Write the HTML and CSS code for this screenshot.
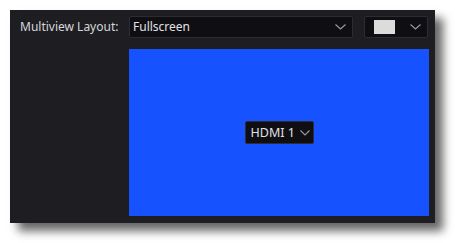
FILE: index.html
```html
<!DOCTYPE html>
<html>
<head>
<meta charset="utf-8">
<link rel="stylesheet" href="styles.css">
</head>
<body>
<div class="panel">
  <div class="label">Multiview Layout:</div>
  <div class="controls">
    <div class="select layout-select">
      <span class="select-text">Fullscreen</span>
      <svg class="chev" width="11" height="6" viewBox="0 0 11 6"><path d="M0.5 0.5 L5.5 5 L10.5 0.5" fill="none" stroke="#9a9aa2" stroke-width="1.1"/></svg>
    </div>
    <div class="select color-select">
      <span class="swatch"></span>
      <svg class="chev" width="11" height="6" viewBox="0 0 11 6"><path d="M0.5 0.5 L5.5 5 L10.5 0.5" fill="none" stroke="#9a9aa2" stroke-width="1.1"/></svg>
    </div>
  </div>
  <div class="preview">
    <div class="source">
      <span>HDMI 1</span>
      <svg class="chev" width="10" height="6" viewBox="0 0 10 6"><path d="M0.5 0.5 L5 5 L9.5 0.5" fill="none" stroke="#9a9aa2" stroke-width="1.1"/></svg>
    </div>
  </div>
</div>
</body>
</html>
```

FILE: styles.css
```css
html, body {
  margin: 0;
  padding: 0;
  background: #ffffff;
}
body {
  width: 455px;
  height: 243px;
  font-family: "Noto Sans", "Open Sans", sans-serif;
}
.panel {
  margin: 10px 0 0 10px;
  width: 425px;
  height: 213px;
  box-sizing: border-box;
  background: #1e1e22;
  box-shadow: 8px 8px 9px rgba(0, 0, 0, 0.6);
  padding: 6px 6px 7px 10px;
  display: grid;
  grid-template-columns: 109px 300px;
  grid-template-rows: 22px 167px;
  row-gap: 11px;
}
.label {
  color: #d6d6dc;
  font-size: 12px;
  line-height: 22px;
}
.controls {
  display: flex;
  gap: 11px;
}
.select {
  box-sizing: border-box;
  height: 22px;
  background: #0f0f13;
  border: 1px solid #2c2c32;
  border-radius: 2px;
  display: flex;
  align-items: center;
  justify-content: space-between;
}
.layout-select {
  width: 224px;
  padding: 0 6px 0 3px;
}
.select-text {
  color: #e2e2e6;
  font-size: 12px;
  line-height: 20px;
}
.color-select {
  width: 64px;
  padding: 0 6px 0 9px;
}
.swatch {
  width: 21px;
  height: 14px;
  background: #dcdcdc;
}
.chev {
  display: block;
}
.preview {
  grid-column: 2;
  grid-row: 2;
  background: #1652fe;
  display: flex;
  align-items: center;
  justify-content: center;
}
.source {
  box-sizing: border-box;
  height: 23px;
  width: 69px;
  background: #0f0f13;
  border: 1px solid #2c2c32;
  border-radius: 2px;
  display: flex;
  align-items: center;
  gap: 5px;
  padding: 0 0 0 5px;
  color: #e2e2e6;
  font-size: 12.5px;
}
```
